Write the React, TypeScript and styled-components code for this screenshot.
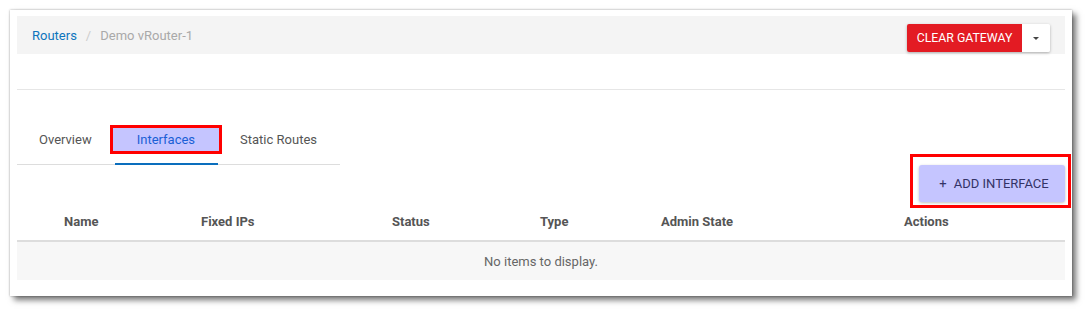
import * as React from "react";
import styled, { createGlobalStyle } from "styled-components";

const GlobalStyle = createGlobalStyle`
    html, body {
        margin: 0;
        padding: 0;
        background: #ffffff;
    }
    body {
        min-height: 312px;
        font-family: Roboto, "Liberation Sans", Arial, sans-serif;
        font-size: 13px;
        color: #555555;
    }
`;

const Frame = styled.div`
    box-sizing: border-box;
    margin: 10px 0 16px 10px;
    width: 1062px;
    height: 286px;
    padding: 6px 7px 16px 7px;
    background: #ffffff;
    box-shadow: 4px 4px 6px rgba(0, 0, 0, 0.55), 0 0 2px rgba(0, 0, 0, 0.35);
    display: flex;
    flex-direction: column;
`;

const BreadcrumbBar = styled.div`
    height: 38px;
    background: #f4f4f4;
    display: flex;
    align-items: center;
    justify-content: space-between;
    padding: 0 15px;
`;

const Crumbs = styled.div`
    display: flex;
    align-items: center;
    gap: 9px;
    font-size: 13px;
`;

const CrumbLink = styled.a`
    color: #0f75bd;
    text-decoration: none;
`;

const CrumbSep = styled.span`
    color: #cccccc;
`;

const CrumbCurrent = styled.span`
    color: #a9a9a9;
`;

const SplitButton = styled.div`
    align-self: flex-end;
    margin-bottom: 2px;
    display: flex;
    height: 28px;
    border-radius: 2px;
    overflow: hidden;
    box-shadow: 0 1px 3px rgba(0, 0, 0, 0.3);
`;

const DangerButton = styled.button`
    border: none;
    background: #e31b23;
    color: #ffffff;
    font-family: inherit;
    font-size: 12.3px;
    text-transform: uppercase;
    white-space: nowrap;
    padding: 0;
    width: 115px;
    cursor: pointer;
`;

const CaretButton = styled.button`
    border: none;
    background: #ffffff;
    width: 28px;
    display: flex;
    align-items: center;
    justify-content: center;
    padding: 0;
    cursor: pointer;
`;

const Caret = styled.span`
    width: 0;
    height: 0;
    border-left: 3px solid transparent;
    border-right: 3px solid transparent;
    border-top: 3px solid #444444;
`;

const Divider = styled.hr`
    margin: 35px 0 0 0;
    border: none;
    border-top: 1px solid #e6e6e6;
`;

const TabList = styled.div`
    margin-top: 24px;
    width: 323px;
    display: flex;
    border-bottom: 1px solid #dddddd;
`;

const Tab = styled.div<{ $active?: boolean }>`
    position: relative;
    height: 51px;
    padding: 2px 23px 0 22px;
    display: flex;
    align-items: center;
    box-sizing: border-box;
    font-size: 13px;
    color: ${(p) => (p.$active ? "#1a5fd6" : "#555555")};
    margin-bottom: -1px;
    border-bottom: 2px solid ${(p) => (p.$active ? "#0a6ebd" : "transparent")};
    z-index: 0;
`;

const Highlight = styled.span`
    position: absolute;
    left: -5px;
    right: -4px;
    top: 11px;
    height: 29px;
    box-sizing: border-box;
    border: 3px solid #ff0000;
    background: #c5c5ff;
    z-index: -1;
`;

const Toolbar = styled.div`
    display: flex;
    justify-content: flex-end;
`;

const AddWrap = styled.div`
    position: relative;
`;

const AddOutline = styled.span`
    position: absolute;
    left: -9px;
    right: -6px;
    top: -11px;
    bottom: -6px;
    border: 3px solid #ff0000;
`;

const AddButton = styled.button`
    position: relative;
    height: 37px;
    width: 146px;
    border: none;
    border-radius: 3px;
    background: #c5c5ff;
    color: #333366;
    font-family: inherit;
    font-size: 13px;
    text-transform: uppercase;
    box-shadow: 0 1px 3px rgba(0, 0, 0, 0.25);
    display: flex;
    align-items: center;
    justify-content: center;
    gap: 7px;
    padding-left: 10px;
    cursor: pointer;
`;

const Table = styled.div`
    display: flex;
    flex-direction: column;
`;

const HeaderRow = styled.div`
    display: grid;
    grid-template-columns: 137px 191px 148px 121px 243px 1fr;
    padding-left: 47px;
    height: 38px;
    align-items: center;
    border-bottom: 2px solid #dddddd;
`;

const HeaderCell = styled.div`
    font-weight: bold;
    font-size: 13px;
    color: #555555;
`;

const EmptyRow = styled.div`
    height: 38px;
    background: #f7f7f7;
    display: flex;
    align-items: center;
    justify-content: center;
    font-size: 13px;
    color: #666666;
`;

const columns = ["Name", "Fixed IPs", "Status", "Type", "Admin State", "Actions"];

const App = () => (
    <>
        <GlobalStyle />
        <Frame>
            <BreadcrumbBar>
                <Crumbs>
                    <CrumbLink href="#">Routers</CrumbLink>
                    <CrumbSep>/</CrumbSep>
                    <CrumbCurrent>Demo vRouter-1</CrumbCurrent>
                </Crumbs>
                <SplitButton>
                    <DangerButton>Clear Gateway</DangerButton>
                    <CaretButton>
                        <Caret />
                    </CaretButton>
                </SplitButton>
            </BreadcrumbBar>
            <Divider />
            <TabList>
                <Tab>Overview</Tab>
                <Tab $active>
                    <Highlight />
                    Interfaces
                </Tab>
                <Tab>Static Routes</Tab>
            </TabList>
            <Toolbar>
                <AddWrap>
                    <AddOutline />
                    <AddButton>
                        <span>+</span>
                        <span>Add Interface</span>
                    </AddButton>
                </AddWrap>
            </Toolbar>
            <Table>
                <HeaderRow>
                    {columns.map((c) => (
                        <HeaderCell key={c}>{c}</HeaderCell>
                    ))}
                </HeaderRow>
                <EmptyRow>No items to display.</EmptyRow>
            </Table>
        </Frame>
    </>
);

export default App;
